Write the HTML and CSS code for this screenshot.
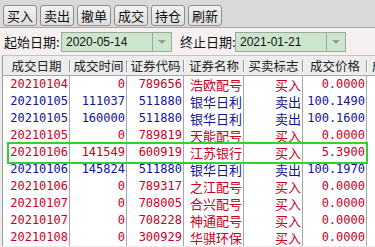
FILE: index.html
```html
<!DOCTYPE html>
<html lang="zh-CN">
<head>
  <meta charset="UTF-8">
  <title>成交查询</title>
  <link rel="stylesheet" href="styles.css">
</head>
<body>
  <div class="toolbar">
    <button class="btn">买入</button>
    <button class="btn">卖出</button>
    <button class="btn">撤单</button>
    <button class="btn">成交</button>
    <button class="btn">持仓</button>
    <button class="btn">刷新</button>
  </div>

  <div class="daterow">
    <span class="label">起始日期:</span>
    <div class="combo"><span class="combo-text">2020-05-14</span><span class="combo-btn"></span></div>
    <span class="label label-end">终止日期:</span>
    <div class="combo"><span class="combo-text">2021-01-21</span><span class="combo-btn"></span></div>
  </div>

  <div class="grid">
    <div class="row head">
      <div class="hcell">成交日期</div>
      <div class="hcell">成交时间</div>
      <div class="hcell">证券代码</div>
      <div class="hcell">证券名称</div>
      <div class="hcell">买卖标志</div>
      <div class="hcell">成交价格</div>
      <div class="hcell">成交金额</div>
    </div>

    <div class="row buy">
      <div class="cell num">20210104</div><div class="cell num">0</div><div class="cell num">789656</div>
      <div class="cell">浩欧配号</div><div class="cell">买入</div><div class="cell num">0.0000</div><div class="cell blank"></div>
    </div>
    <div class="row sell">
      <div class="cell num">20210105</div><div class="cell num">111037</div><div class="cell num">511880</div>
      <div class="cell">银华日利</div><div class="cell">卖出</div><div class="cell num">100.1490</div><div class="cell blank"></div>
    </div>
    <div class="row sell">
      <div class="cell num">20210105</div><div class="cell num">160000</div><div class="cell num">511880</div>
      <div class="cell">银华日利</div><div class="cell">卖出</div><div class="cell num">100.1600</div><div class="cell blank"></div>
    </div>
    <div class="row buy">
      <div class="cell num">20210105</div><div class="cell num">0</div><div class="cell num">789819</div>
      <div class="cell">天能配号</div><div class="cell">买入</div><div class="cell num">0.0000</div><div class="cell blank"></div>
    </div>
    <div class="row buy selected">
      <div class="cell num">20210106</div><div class="cell num">141549</div><div class="cell num">600919</div>
      <div class="cell">江苏银行</div><div class="cell">买入</div><div class="cell num">5.3900</div><div class="cell blank"></div>
    </div>
    <div class="row sell">
      <div class="cell num">20210106</div><div class="cell num">145824</div><div class="cell num">511880</div>
      <div class="cell">银华日利</div><div class="cell">卖出</div><div class="cell num">100.1970</div><div class="cell blank"></div>
    </div>
    <div class="row buy">
      <div class="cell num">20210106</div><div class="cell num">0</div><div class="cell num">789317</div>
      <div class="cell">之江配号</div><div class="cell">买入</div><div class="cell num">0.0000</div><div class="cell blank"></div>
    </div>
    <div class="row buy">
      <div class="cell num">20210107</div><div class="cell num">0</div><div class="cell num">708005</div>
      <div class="cell">合兴配号</div><div class="cell">买入</div><div class="cell num">0.0000</div><div class="cell blank"></div>
    </div>
    <div class="row buy">
      <div class="cell num">20210107</div><div class="cell num">0</div><div class="cell num">708228</div>
      <div class="cell">神通配号</div><div class="cell">买入</div><div class="cell num">0.0000</div><div class="cell blank"></div>
    </div>
    <div class="row buy">
      <div class="cell num">20210108</div><div class="cell num">0</div><div class="cell num">300929</div>
      <div class="cell">华骐环保</div><div class="cell">买入</div><div class="cell num">0.0000</div><div class="cell blank"></div>
    </div>
  </div>
</body>
</html>
```

FILE: styles.css
```css
body {
  margin: 0;
  padding: 0;
  width: 375px;
  height: 247px;
  overflow: hidden;
  background: #ececec;
  font-family: "Noto Sans CJK SC", sans-serif;
  font-size: 13px;
  color: #1a1a1a;
}

/* toolbar */
.toolbar {
  display: flex;
  gap: 3px;
  height: 28px;
  box-sizing: border-box;
  padding: 5px 0 0 3px;
  background: #d9d9d9;
  border-bottom: 1px solid #a8a8a8;
}

.btn {
  width: 34px;
  height: 21px;
  padding: 0;
  box-sizing: border-box;
  border: 1px solid #8e8e8e;
  border-radius: 3px;
  background: linear-gradient(#f2f2f2, #dedede);
  font-family: "Noto Sans CJK SC", sans-serif;
  font-size: 13px;
  line-height: 18px;
  color: #111;
}

/* date filters */
.daterow {
  display: flex;
  align-items: center;
  height: 27px;
  padding-left: 4px;
  background: #f6f0f0;
}

.label {
  width: 57px;
  white-space: nowrap;
  color: #111;
}

.label-end {
  width: 55px;
  margin-left: 8px;
}

.combo {
  display: flex;
  width: 111px;
  height: 20px;
  box-sizing: border-box;
  border: 1px solid #a3a3a3;
  background: #cbe7cb;
}

.combo-text {
  flex: 1;
  padding-left: 4px;
  font-family: "Liberation Sans", sans-serif;
  font-size: 12px;
  line-height: 18px;
  color: #111;
}

.combo-btn {
  width: 18px;
  border-left: 1px solid #a3a3a3;
  display: flex;
  align-items: center;
  justify-content: center;
}

.combo-btn::before {
  content: "";
  border-left: 4px solid transparent;
  border-right: 4px solid transparent;
  border-top: 4px solid #9a9a9a;
}

/* trade list */
.grid {
  margin-left: 2px;
  border-left: 1px solid #9c9c9c;
  border-top: 1px solid #c4c4c4;
  background: #fff;
}

.row {
  display: grid;
  grid-template-columns: 67px 57px 57px 60px 59px 64px 60px;
  height: 17px;
  line-height: 17px;
}

.head {
  height: 19px;
  line-height: 19px;
  background: #ededed;
  border-bottom: 1px solid #a8a8a8;
}

.hcell {
  position: relative;
  text-align: center;
  font-size: 12.5px;
  color: #222;
  white-space: nowrap;
}

.hcell::after {
  content: "";
  position: absolute;
  right: 0;
  top: 4px;
  bottom: 3px;
  width: 1px;
  background: #9a9a9a;
  box-shadow: 1px 0 0 #fff;
}

.cell {
  text-align: right;
  padding-right: 1px;
  border-right: 1px solid #a6a6a6;
  white-space: nowrap;
  overflow: hidden;
}

.cell.num {
  font-family: "DejaVu Sans Mono", "Liberation Mono", monospace;
  font-size: 12px;
}

.cell.blank {
  border-right: none;
}

.buy {
  color: #c8001e;
}

.sell {
  color: #12129a;
}

.selected {
  position: relative;
}

.selected::after {
  content: "";
  position: absolute;
  left: 4px;
  top: -2px;
  width: 361px;
  height: 22px;
  box-sizing: border-box;
  border: 2px solid #33d033;
  pointer-events: none;
}
```
